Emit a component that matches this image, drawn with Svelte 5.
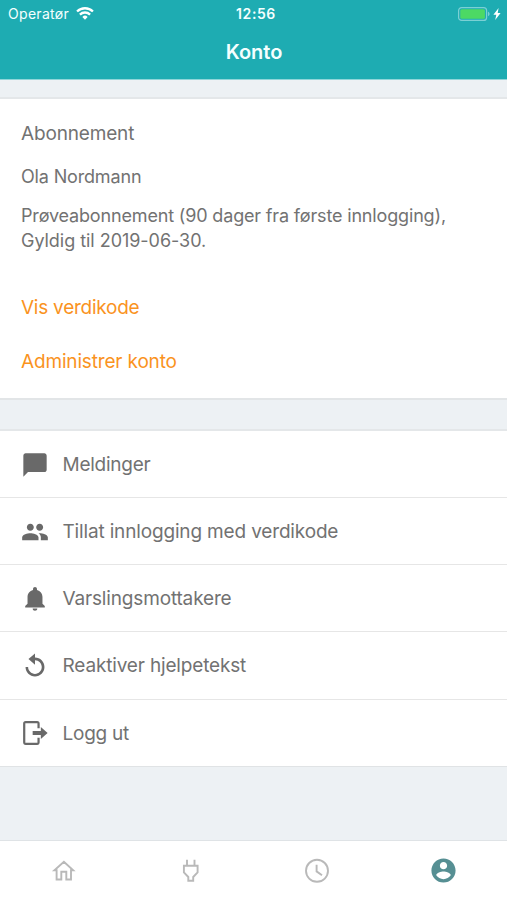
<script>
	const actions = [
		{ icon: 'message', label: 'Meldinger' },
		{ icon: 'people', label: 'Tillat innlogging med verdikode' },
		{ icon: 'bell', label: 'Varslingsmottakere' },
		{ icon: 'replay', label: 'Reaktiver hjelpetekst' },
		{ icon: 'logout', label: 'Logg ut' }
	];

	const tabs = ['home', 'plug', 'clock', 'account'];

	const paths = {
		message: 'M20 2H4c-1.1 0-1.99.9-1.99 2L2 22l4-4h14c1.1 0 2-.9 2-2V4c0-1.1-.9-2-2-2z',
		people: 'M16 11c1.66 0 2.99-1.34 2.99-3S17.66 5 16 5s-3 1.34-3 3 1.34 3 3 3zm-8 0c1.66 0 2.99-1.34 2.99-3S9.66 5 8 5 5 6.34 5 8s1.34 3 3 3zm0 2c-2.33 0-7 1.17-7 3.5V19h14v-2.5c0-2.33-4.67-3.5-7-3.5zm8 0c-.29 0-.62.02-.97.05 1.16.84 1.97 1.97 1.97 3.45V19h6v-2.5c0-2.33-4.67-3.5-7-3.5z',
		bell: 'M12 22c1.1 0 2-.7 2-1.900h-4c0 1.200.9 1.900 2 1.900zm6.400-6v-5.700c0-3.070-1.900-5.400-4.700-6.100V3.500c0-.94-.76-1.700-1.700-1.700s-1.700.76-1.700 1.700v.7C7.500 4.900 5.600 7.230 5.600 10.300V16L3.600 18v1.200h16.800V18z',
		replay: 'M12 4.800V1.200L6.400 6l5.600 5V7.100c3.250 0 5.800 2.600 5.800 5.800s-2.600 5.900-5.800 5.900-5.900-2.650-5.900-5.900H3.900c0 4.500 3.600 8.100 8.100 8.100s8.100-3.600 8.100-8.100S16.500 4.800 12 4.800z',
		logout: 'M16 8V4a2.2 2.2 0 0 0-2.2-2.2H4A2.2 2.2 0 0 0 1.800 4v16A2.2 2.2 0 0 0 4 22.200h9.800A2.2 2.2 0 0 0 16 20v-4h-1.900v4.300H3.700V3.700h10.400V8zM10 10.200h7V6.800l5.800 5.200-5.800 5.200v-3.400h-7z',
		account: 'M12 2C6.48 2 2 6.48 2 12s4.48 10 10 10 10-4.48 10-10S17.52 2 12 2zm0 3c1.66 0 3 1.34 3 3s-1.34 3-3 3-3-1.34-3-3 1.34-3 3-3zm0 14.2c-2.5 0-4.71-1.28-6-3.22.03-1.99 4-3.08 6-3.08 1.99 0 5.97 1.09 6 3.08-1.29 1.94-3.5 3.22-6 3.22z'
	};

	const outlines = {
		home: 'M2.4 11.2h2.200v9.300h4.700v-7.700h5v7.700h4.700v-9.300h2.200L11.900 2.700z',
		plug: 'M8 .8v6M15.500 .8v6M4.900 6.800h13.700v6.500l-4.400 4.700v3.700H9.300V18l-4.400-4.700z',
		clock: 'M12 .800a11 11 0 1 0 0 22 11 11 0 0 0 0-22zM11.600 5.800v6.600l5.400 3.800'
	};
</script>

<div class="screen">
	<header>
		<div class="status">
			<div class="carrier">
				<span>Operatør</span>
				<svg class="wifi" viewBox="0 0 17 12">
					<path d="M8.5 11.8 6 9.2a3.6 3.6 0 0 1 5 0z" fill="#fff" />
					<path d="M3.7 7a6.9 6.9 0 0 1 9.6 0M1 4.1a10.8 10.8 0 0 1 15 0" fill="none" stroke="#fff" stroke-width="2.2" />
				</svg>
			</div>
			<span class="time">12:56</span>
			<div class="power">
				<svg class="battery" viewBox="0 0 32 14">
					<rect x=".6" y=".6" width="28" height="12.8" rx="3" fill="none" stroke="#7bd0d4" stroke-width="1.2" />
					<rect x="2.3" y="2.2" width="24.6" height="9.6" rx="1.5" fill="#4cd964" />
					<path d="M30 4.8v4.4c1-.4 1.6-1.2 1.6-2.2S31 5.2 30 4.8z" fill="#7bd0d4" />
				</svg>
				<svg class="bolt" viewBox="0 0 8 12">
					<path d="M5.6 0 .4 6.8h2.9L2.2 12 7.6 4.9H4.7z" fill="#fff" />
				</svg>
			</div>
		</div>
		<h1>Konto</h1>
	</header>

	<main>
		<section class="subscription">
			<h2>Abonnement</h2>
			<p class="name">Ola Nordmann</p>
			<p class="plan">
				Prøveabonnement (90 dager fra første innlogging),<br />
				<span class="expiry">Gyldig til 2019-06-30.</span>
			</p>
			<a class="code" href="#code">Vis verdikode</a>
			<a class="manage" href="#manage">Administrer konto</a>
		</section>

		<ul>
			{#each actions as action}
				<li>
					<svg viewBox="0 0 24 24"><path d={paths[action.icon]} /></svg>
					<span class={action.icon}>{action.label}</span>
				</li>
			{/each}
		</ul>
	</main>

	<nav>
		{#each tabs as tab}
			<div class="tab" class:active={tab === 'account'}>
				<svg class={tab} viewBox="0 0 24 24">
					{#if outlines[tab]}
						<path class="outline" d={outlines[tab]} />
					{:else}
						<path d={paths[tab]} />
					{/if}
				</svg>
			</div>
		{/each}
	</nav>
</div>

<style>
	.screen {
		display: flex;
		flex-direction: column;
		width: 507px;
		height: 900px;
		overflow: hidden;
		background: #edf1f4;
		color: #727272;
		font-family: Inter, "Liberation Sans", sans-serif;
		font-size: 19px;
		letter-spacing: -0.16px;
	}

	.screen * {
		box-sizing: border-box;
	}

	svg {
		display: block;
		flex: none;
		overflow: visible;
	}

	header {
		height: 80px;
		flex: none;
		border-bottom: 1px solid #8fd6d9;
		background: #1eacb2;
		color: #f4ffff;
		letter-spacing: 0;
	}

	.status {
		display: grid;
		grid-template-columns: 1fr auto 1fr;
		align-items: center;
		height: 27px;
		padding: 0 6px 0 8px;
		font-size: 14px;
	}

	.carrier,
	.power {
		display: flex;
		align-items: center;
	}

	.carrier {
		gap: 7px;
		letter-spacing: 0.3px;
	}

	.power {
		justify-content: flex-end;
		gap: 3px;
	}

	.wifi {
		width: 18px;
		height: 13px;
	}

	.battery {
		width: 32px;
		height: 14px;
	}

	.bolt {
		width: 8px;
		height: 12px;
	}

	.time {
		padding-left: 3px;
		font-weight: 600;
		letter-spacing: 0.6px;
	}

	h1 {
		margin: 0;
		padding-left: 1px;
		font-size: 20px;
		font-weight: 600;
		line-height: 50px;
		text-align: center;
	}

	.subscription {
		display: flex;
		flex-direction: column;
		align-items: flex-start;
		height: 303px;
		margin-top: 17px;
		padding: 23px 21px 0;
		border-top: 2px solid #e4e7e9;
		border-bottom: 2px solid #e2e5e7;
		background: #fff;
	}

	h2 {
		margin: 0;
		font-size: 19px;
		font-weight: 400;
		line-height: 24px;
	}

	.name {
		margin: 19px 0 0;
		font-size: 18px;
		line-height: 24px;
	}

	.plan {
		margin: 15px 0 0;
		font-size: 18px;
		line-height: 24.5px;
		white-space: nowrap;
	}

	.expiry {
		letter-spacing: -0.04px;
	}

	a {
		color: #fa931e;
		line-height: 24px;
		text-decoration: none;
	}

	.code {
		margin-top: 43px;
		letter-spacing: -0.25px;
	}

	.manage {
		margin-top: 30px;
	}

	ul {
		margin: 29px 0 0;
		padding: 0;
		border-top: 2px solid #e4e7e9;
		border-bottom: 1px solid #e0e3e5;
		background: #fff;
		list-style: none;
	}

	li {
		display: flex;
		align-items: center;
		gap: 13.5px;
		height: 67.2px;
		padding: 1px 0 0 21px;
	}

	li:first-child {
		height: 66px;
	}

	li + li {
		border-top: 1px solid #e6e6e6;
	}

	li svg {
		width: 28px;
		height: 28px;
		fill: #696969;
	}

	.message,
	.logout {
		letter-spacing: -0.25px;
	}

	nav {
		display: flex;
		height: 60px;
		margin-top: auto;
		padding-left: 1px;
		border-top: 1px solid #dfe3e6;
		background: #fff;
	}

	.tab {
		display: flex;
		flex: 1;
		align-items: center;
		justify-content: center;
		color: #b9b9b9;
	}

	.tab svg {
		width: 24px;
		height: 24px;
		fill: currentColor;
	}

	.tab .account {
		width: 29px;
		height: 29px;
	}

	.tab .outline {
		fill: none;
		stroke: currentColor;
		stroke-width: 1.9;
	}

	.tab.active {
		color: #568f93;
	}
</style>
